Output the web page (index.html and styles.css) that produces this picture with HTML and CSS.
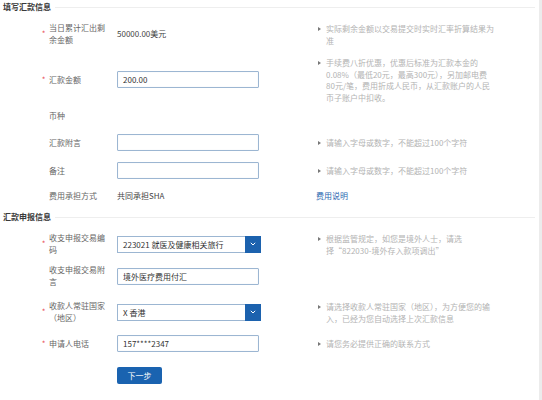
FILE: index.html
```html
<!DOCTYPE html>
<html lang="zh-CN">
<head>
<meta charset="utf-8">
<title>填写汇款信息</title>
<link rel="stylesheet" href="styles.css">
</head>
<body>
<div class="page">
  <div class="main">
    <div class="section-head"><span class="t">填写汇款信息</span><span class="line"></span></div>

    <div class="row h24 mt8">
      <span class="star">*</span>
      <span class="label">当日累计汇出剩余金额</span>
      <div class="field"><span class="value">50000.00美元</span></div>
      <div class="hint"><i class="bullet"></i><span>实际剩余金额以交易提交时实时汇率折算结果为<br>准</span></div>
    </div>

    <div class="row h46 mt10">
      <span class="star">*</span>
      <span class="label">汇款金额</span>
      <div class="field"><input class="input" type="text" value="200.00"></div>
      <div class="hint"><i class="bullet"></i><span>手续费八折优惠，优惠后标准为汇款本金的<br>0.08%（最低20元，最高300元），另加邮电费<br>80元/笔，费用折成人民币，从汇款账户的人民<br>币子账户中扣收。</span></div>
    </div>

    <div class="row h12 mt8">
      <span class="star"></span>
      <span class="label">币种</span>
      <div class="field"></div>
      <div></div>
    </div>

    <div class="row h17 mt12">
      <span class="star"></span>
      <span class="label">汇款附言</span>
      <div class="field"><input class="input" type="text" value=""></div>
      <div class="hint"><i class="bullet"></i><span>请输入字母或数字，不能超过100个字符</span></div>
    </div>

    <div class="row h17 mt11">
      <span class="star"></span>
      <span class="label">备注</span>
      <div class="field"><input class="input" type="text" value=""></div>
      <div class="hint"><i class="bullet"></i><span>请输入字母或数字，不能超过100个字符</span></div>
    </div>

    <div class="row h12 mt11">
      <span class="star"></span>
      <span class="label">费用承担方式</span>
      <div class="field"><span class="value">共同承担SHA</span></div>
      <div class="hint link-cell"><a class="link" href="#">费用说明</a></div>
    </div>

    <div class="section-head mt8"><span class="t">汇款申报信息</span><span class="line"></span></div>

    <div class="row h24 mt8">
      <span class="star">*</span>
      <span class="label">收支申报交易编码</span>
      <div class="field"><div class="select"><span class="sel-text">223021 就医及健康相关旅行</span><span class="sel-btn"><svg width="6" height="4" viewBox="0 0 6 4"><path d="M0.8 0.8 L3 3 L5.2 0.8" fill="none" stroke="#fff" stroke-width="1"/></svg></span></div></div>
      <div class="hint"><i class="bullet"></i><span>根据监管规定，如您是境外人士，请选<br>择“822030-境外存入款项调出”</span></div>
    </div>

    <div class="row h24 mt8">
      <span class="star"></span>
      <span class="label">收支申报交易附言</span>
      <div class="field"><input class="input" type="text" value="境外医疗费用付汇"></div>
      <div></div>
    </div>

    <div class="row h24 mt12">
      <span class="star">*</span>
      <span class="label">收款人常驻国家（地区）</span>
      <div class="field"><div class="select"><span class="sel-text">X 香港</span><span class="sel-btn"><svg width="6" height="4" viewBox="0 0 6 4"><path d="M0.8 0.8 L3 3 L5.2 0.8" fill="none" stroke="#fff" stroke-width="1"/></svg></span></div></div>
      <div class="hint"><i class="bullet"></i><span>请选择收款人常驻国家（地区），为方便您的输<br>入，已经为您自动选择上次汇款信息</span></div>
    </div>

    <div class="row h17 mt11">
      <span class="star">*</span>
      <span class="label">申请人电话</span>
      <div class="field"><input class="input" type="text" value="157****2347"></div>
      <div class="hint"><i class="bullet"></i><span>请您务必提供正确的联系方式</span></div>
    </div>

    <div class="actions">
      <button class="btn" type="button">下一步</button>
    </div>
  </div>
  <div class="scroll"></div>
</div>
</body>
</html>
```
FILE: styles.css
```css
* { box-sizing: border-box; }
html, body { margin: 0; padding: 0; background: #fff; }
body {
  font-family: "Noto Sans CJK SC", "Noto Sans", sans-serif;
  font-size: 8px;
  color: #666;
}
.page {
  display: flex;
  min-height: 400px;
}
.main {
  width: 539px;
  padding-right: 4px;
}
.scroll {
  width: 3px;
  background: #ececec;
}
.section-head {
  display: flex;
  align-items: center;
  height: 14px;
  padding-left: 3px;
  gap: 4px;
}
.section-head .t {
  font-weight: bold;
  color: #3a3a3a;
  line-height: 14px;
}
.section-head .line {
  flex: 1;
  height: 1px;
  background: #eeeeee;
}
.row {
  display: grid;
  grid-template-columns: 11px 68px 201px auto;
  align-items: center;
  padding-left: 38px;
}
.h12 { height: 12px; }
.h17 { height: 17px; }
.h24 { height: 24px; }
.h46 { height: 46px; }
.mt8 { margin-top: 8px; }
.mt10 { margin-top: 10px; }
.mt11 { margin-top: 11px; }
.mt12 { margin-top: 12px; }
.star {
  color: #e9505a;
  text-align: center;
  line-height: 12px;
  font-size: 8px;
}
.label {
  width: 60px;
  line-height: 12px;
  color: #666;
}
.field {
  display: flex;
  align-items: center;
}
.value {
  color: #444;
  line-height: 12px;
}
.input {
  width: 142px;
  height: 17px;
  border: 1px solid #9cb6d2;
  border-radius: 1px;
  padding: 0 5px;
  margin: 0;
  font-family: inherit;
  font-size: 8px;
  color: #333;
  background: #fff;
  outline: none;
  box-shadow: inset 0 0 1px rgba(120,150,190,0.3);
}
.select {
  width: 144px;
  height: 17px;
  border: 1px solid #9cb6d2;
  display: flex;
  align-items: center;
  background: #fff;
}
.sel-text {
  flex: 1;
  padding-left: 5px;
  color: #333;
  white-space: nowrap;
}
.sel-btn {
  width: 16px;
  height: 17px;
  margin: -1px -1px -1px 0;
  background: #1c62ae;
  display: flex;
  align-items: center;
  justify-content: center;
}
.hint {
  display: flex;
  align-items: flex-start;
  color: #b3b3b3;
  line-height: 11.7px;
  white-space: nowrap;
  margin-top: 1px;
}
.bullet {
  width: 0;
  height: 0;
  border-left: 3px solid #777;
  border-top: 2.5px solid transparent;
  border-bottom: 2.5px solid transparent;
  margin-top: 3.5px;
  margin-right: 5px;
  flex: none;
}
.link-cell {
  margin-left: -2px;
  margin-top: 0;
}
.link {
  color: #2a66b0;
  text-decoration: none;
  line-height: 12px;
}
.actions {
  margin-top: 15px;
  padding-left: 117px;
}
.btn {
  width: 45px;
  height: 17px;
  border: none;
  border-radius: 2px;
  background: #1a63b0;
  color: #fff;
  font-family: inherit;
  font-size: 8px;
  padding: 0;
  margin: 0;
  cursor: pointer;
}
```
